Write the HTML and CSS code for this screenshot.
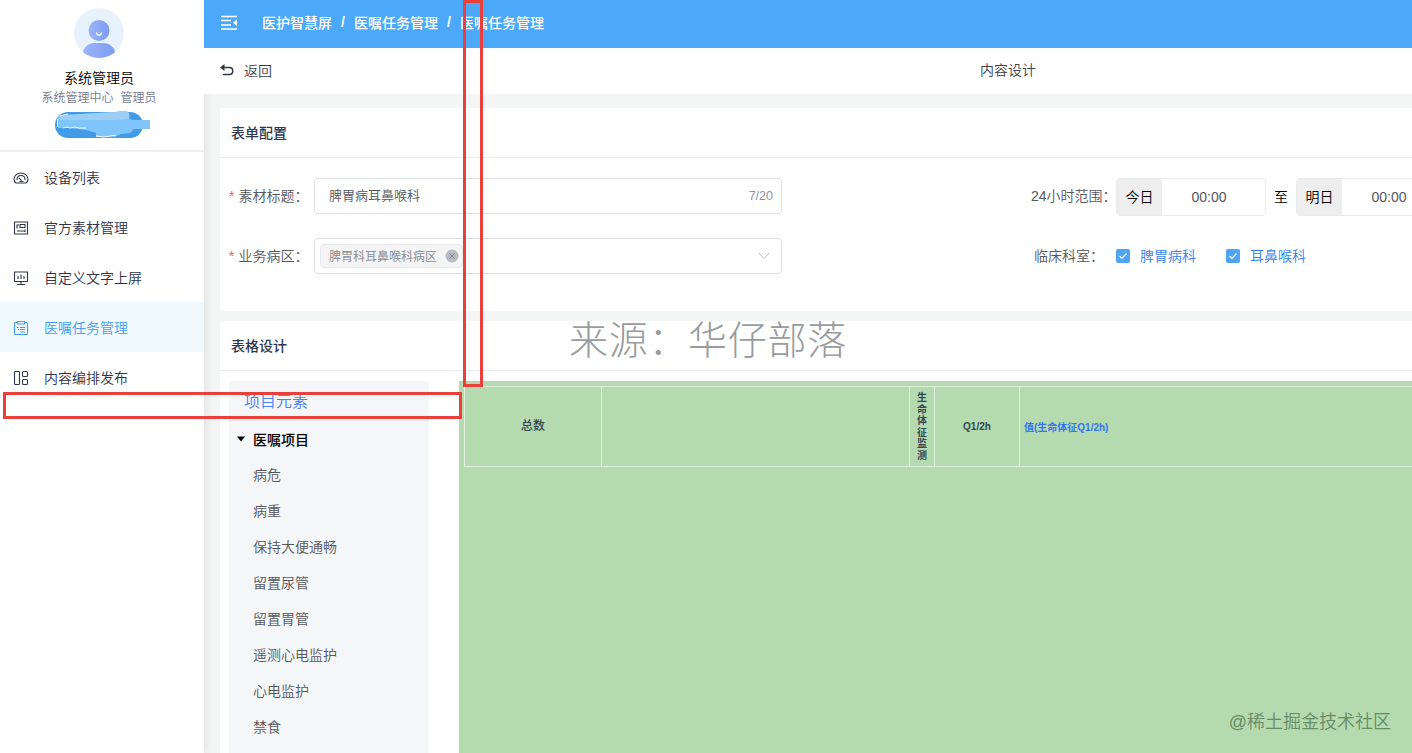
FILE: index.html
```html
<!DOCTYPE html>
<html lang="zh-CN">
<head>
    <meta charset="UTF-8">
    <meta name="viewport" content="width=device-width, initial-scale=1.0">
    <title>内容设计</title>
    <link rel="stylesheet" href="styles.css">
</head>
<body>
    <div class="layout">
        <aside class="sidebar">
            <div class="profile">
                <svg class="avatar" width="50" height="50" viewBox="0 0 50 50">
                    <defs>
                        <clipPath id="round"><circle cx="25" cy="25" r="25"/></clipPath>
                        <linearGradient id="body" x1="0" x2="1"><stop offset="0" stop-color="#9db4fb"/><stop offset="1" stop-color="#7b9cf0"/></linearGradient>
                    </defs>
                    <circle cx="25" cy="25" r="25" fill="#e8f2fd"/>
                    <g clip-path="url(#round)" fill="url(#body)">
                        <circle cx="25" cy="22.500" r="10.500"/>
                        <path d="M8.500 46c1-7 6-11 12-11h9c6 0 11 4 12 11v6h-33z"/>
                    </g>
                    <path d="M22.500 24.500c.5 3.500 4.500 3.500 5 0" fill="none" stroke="#fff" stroke-width="1.500"/>
                </svg>
                <div class="name">系统管理员</div>
                <div class="role"><span>系统管理中心</span><span>管理员</span></div>
                <div class="badge">
                    <svg width="97" height="29" viewBox="0 0 97 29">
                        <rect x="1" y="2" width="88" height="26" rx="13" fill="#429be8"/>
                        <path d="M3 8q1-3 6-3l52-3q10-2 13 0 2 2 1 7l5 1h16v9H80l-4 4-9 1-6 3H42v-4l-10-3-17-2H4z" fill="#7fc4fb"/>
                        <path d="M12 5l50-3q9-2 12 0 2 2 1 7l-13 1H4q1-5 8-5z" fill="#9bcdf5"/>
                        <path d="M9 18l4-1 3 1 5-1 4 1h7M42 26l8 1 12-2M3.500 9v8M6 6l8-2" fill="none" stroke="#f2faff" stroke-width="1"/>
                    </svg>
                </div>
            </div>
            <nav class="menu">
                <a class="menu-item">
                    <svg class="icon" viewBox="0 0 16 16"><path d="M3 13C1.300 12 1 10.500 1 9c.3-3.500 3.300-6 7-6s6.700 2.500 7 6c0 1.500-.3 3-2 4zM4 10c-.3-2.800 1.500-4.500 4-4.500s4.300 1.700 4 4.500M8.500 10.500L5.800 7.800M6.500 11.500h4"/></svg>
                    <span>设备列表</span>
                </a>
                <a class="menu-item">
                    <svg class="icon" viewBox="0 0 16 16"><path d="M1.500 2h13v12h-13zM4 4.500v4M4 5h2M7 4.500h5v3H7zM4 11h8M12 9.500V12"/></svg>
                    <span>官方素材管理</span>
                </a>
                <a class="menu-item">
                    <svg class="icon" viewBox="0 0 16 16"><path d="M1.500 2h13v9.500h-13zM5 6v3M8 4.500V9M11 6v3M8 11.500V14M4 14.500h8"/></svg>
                    <span>自定义文字上屏</span>
                </a>
                <a class="menu-item active">
                    <svg class="icon" viewBox="0 0 16 16"><path d="M4.500 2.500h-2q-1 0-1 1v10q0 1 1 1h11q1 0 1-1v-10q0-1-1-1h-2M4.500 1.500h7v2.500h-7zM4 7.500h1.500M7 7.500h5M5 9.500h1M7 9.500h5M7 12h5"/></svg>
                    <span>医嘱任务管理</span>
                </a>
                <a class="menu-item">
                    <svg class="icon" viewBox="0 0 16 16"><rect x="1.500" y="1.500" width="5" height="13" rx=".8"/><rect x="9.500" y="1.500" width="5" height="5" rx="1"/><rect x="9.500" y="9.500" width="5" height="5" rx="1"/></svg>
                    <span>内容编排发布</span>
                </a>
            </nav>
        </aside>

        <main class="main">
            <header class="topbar">
                <svg class="fold" width="17" height="16" viewBox="0 0 17 16"><path d="M0 1.500h16M0 5.500h10M0 10h10M0 14h16" stroke="#fff" stroke-width="1.300"/><path d="M16 4.500v6.500l-4-3.250z" fill="#fff"/></svg>
                <div class="crumbs"><span>医护智慧屏</span><i>/</i><span>医嘱任务管理</span><i>/</i><span>医嘱任务管理</span></div>
            </header>
            <div class="backbar">
                <div class="back">
                    <svg width="14" height="12" viewBox="0 0 14 12"><path d="M2 3.500h7.500c4.300 0 4.300 7 0 7H3" fill="none" stroke="#303846" stroke-width="1.500"/><path d="M0 3.500L4.500 0v7z" fill="#303846"/></svg>
                    <span>返回</span>
                </div>
                <div class="page-title">内容设计</div>
            </div>

            <section class="card config">
                <h2>表单配置</h2>
                <div class="form">
                    <div class="row">
                        <label class="required">素材标题：</label>
                        <div class="input"><span>脾胃病耳鼻喉科</span><small>7/20</small></div>
                    </div>
                    <div class="row range">
                        <label>24小时范围：</label>
                        <div class="time"><b>今日</b><span>00:00</span></div>
                        <em>至</em>
                        <div class="time"><b>明日</b><span>00:00</span></div>
                    </div>
                    <div class="row">
                        <label class="required">业务病区：</label>
                        <div class="input select">
                            <div class="tag">脾胃科耳鼻喉科病区
                                <svg width="14" height="14" viewBox="0 0 14 14"><circle cx="7" cy="7" r="6.500" fill="#b9bcc2"/><path d="M4.500 4.500l5 5M9.500 4.500l-5 5" stroke="#7f838a"/></svg>
                            </div>
                            <svg width="12" height="8" viewBox="0 0 12 8"><path d="M1 1l5 5.500L11 1" fill="none" stroke="#bcc0c8"/></svg>
                        </div>
                    </div>
                    <div class="row dept">
                        <label>临床科室：</label>
                        <div class="check"><svg width="14" height="14" viewBox="0 0 14 14"><rect width="14" height="14" rx="2" fill="#50a4f5"/><path d="M3.500 7l2.500 2.500 4.500-5" fill="none" stroke="#fff" stroke-width="1.200"/></svg><span>脾胃病科</span></div>
                        <div class="check"><svg width="14" height="14" viewBox="0 0 14 14"><rect width="14" height="14" rx="2" fill="#50a4f5"/><path d="M3.500 7l2.500 2.500 4.500-5" fill="none" stroke="#fff" stroke-width="1.200"/></svg><span>耳鼻喉科</span></div>
                    </div>
                </div>
            </section>

            <section class="card design">
                <h2>表格设计</h2>
                <div class="workspace">
                    <div class="elements">
                        <div class="elements-title">项目元素</div>
                        <div class="group"><svg width="8" height="6" viewBox="0 0 8 6"><path d="M0 .5h8L4 5.500z"/></svg>医嘱项目</div>
                        <ul>
                            <li>病危</li>
                            <li>病重</li>
                            <li>保持大便通畅</li>
                            <li>留置尿管</li>
                            <li>留置胃管</li>
                            <li>遥测心电监护</li>
                            <li>心电监护</li>
                            <li>禁食</li>
                        </ul>
                    </div>
                    <div class="canvas">
                        <div class="sheet">
                            <div class="cell total">总数</div>
                            <div class="cell"></div>
                            <div class="cell vertical">生命体征监测</div>
                            <div class="cell">Q1/2h</div>
                            <div class="cell value">值(生命体征Q1/2h)</div>
                        </div>
                    </div>
                </div>
            </section>
        </main>
    </div>

    <div class="mark mark-v"></div>
    <div class="mark mark-h"></div>
    <div class="source">来源：华仔部落</div>
    <div class="community">@稀土掘金技术社区</div>
</body>
</html>
```

FILE: styles.css
```css
* {
    box-sizing: border-box;
}
body {
    margin: 0;
    height: 753px;
    overflow: hidden;
    position: relative;
    font-family: "Liberation Sans", "Noto Sans CJK SC", sans-serif;
    font-size: 14px;
    font-weight: 350;
    color: #54565c;
    background: #f4f5f5;
}
.layout {
    display: flex;
    height: 753px;
    overflow: hidden;
}
.sidebar {
    width: 204px;
    flex: none;
    background: #fff;
    box-shadow: 0 0 10px rgba(0, 0, 0, 0.12);
}
.profile {
    height: 152px;
    padding: 8px 6px 0 0;
    border-bottom: 2px solid #eef0f0;
    display: flex;
    flex-direction: column;
    align-items: center;
}
.avatar {
    flex: none;
}
.name {
    margin-top: 10px;
    line-height: 20px;
    color: #000;
}
.role {
    display: flex;
    gap: 7px;
    font-size: 12px;
    line-height: 20px;
    color: #74788e;
}
.badge {
    margin: 2px 0 0 7px;
    height: 29px;
}
.menu {
    padding-top: 1px;
}
.menu-item {
    display: flex;
    align-items: center;
    gap: 15px;
    height: 50px;
    padding-left: 13px;
    color: #303448;
}
.menu-item span {
    margin-top: -2px;
}
.menu-item.active {
    background: #f0f9fd;
    color: #459fef;
    box-shadow: 0 -1px #f0f9fd;
    height: 49px;
    margin-bottom: 1px;
}
.icon {
    width: 16px;
    height: 16px;
    fill: none;
    stroke: currentColor;
    stroke-width: 1.1;
}

/* wider than the window, the right side is cut off */
.main {
    width: 1608px;
    flex: none;
    display: flex;
    flex-direction: column;
}
.topbar {
    height: 48px;
    flex: none;
    display: flex;
    align-items: center;
    gap: 24px;
    padding: 0 0 2px 17px;
    background: #4ca9f9;
    color: #fff;
}
.crumbs {
    display: flex;
    align-items: center;
    margin-top: -2px;
    font-weight: 500;
}
.crumbs i {
    width: 22px;
    text-align: center;
    font-style: normal;
    font-weight: bold;
}
.backbar {
    height: 46px;
    flex: none;
    display: grid;
    grid-template-columns: 1fr auto 1fr;
    align-items: center;
    padding: 0 16px 2px;
    background: #fff;
    color: #3c404c;
}
.page-title {
    padding-bottom: 2px;
}
.back {
    display: flex;
    align-items: center;
    gap: 10px;
}
.card {
    margin-left: 16px;
    background: #fff;
}
.card h2 {
    margin: 0;
    height: 50px;
    line-height: 51px;
    padding-left: 11px;
    border-bottom: 1px solid #ebedef;
    font-size: 14px;
    font-weight: 500;
    color: #303850;
}
.config {
    height: 203px;
    flex: none;
    margin-top: 14px;
}
.form {
    display: grid;
    grid-template-columns: 797px 1fr;
    row-gap: 24px;
    padding: 20px 0 0 9px;
}
.row {
    display: flex;
    align-items: center;
    height: 36px;
}
.row label {
    width: 85px;
    padding-bottom: 2px;
    white-space: nowrap;
}
.row.range {
    height: 38px;
    margin-bottom: -2px;
}
.row.range label {
    width: 90px;
    padding: 0 0 4px 5px;
}
.row.dept label {
    width: 90px;
    padding-left: 8px;
}
.required::before {
    content: "*";
    margin-right: 4px;
    color: #f05b5b;
}
.input {
    width: 468px;
    height: 36px;
    display: flex;
    align-items: center;
    justify-content: space-between;
    padding: 0 8px 0 14px;
    border: 1px solid #dcdfe3;
    border-radius: 4px;
    font-size: 13px;
}
.input span {
    padding-bottom: 3px;
}
.input small {
    font-size: 12.500px;
    color: #909399;
}
.select {
    padding: 0 11px 0 5px;
}
.tag {
    display: flex;
    align-items: center;
    gap: 8px;
    height: 24px;
    padding: 0 3px 1px 8px;
    border: 1px solid #e9e9eb;
    border-radius: 4px;
    background: #f4f4f5;
    color: #84878d;
    font-size: 12px;
}
.time {
    width: 150px;
    height: 38px;
    display: flex;
    border: 1px solid #ebebeb;
    border-radius: 4px;
    overflow: hidden;
    line-height: 36px;
    text-align: center;
}
.time b {
    width: 45px;
    background: #eee;
    color: #000;
    font-weight: 350;
}
.time span {
    width: 94px;
}
.row em {
    width: 30px;
    padding-bottom: 2px;
    text-align: center;
    font-style: normal;
    color: #000;
}
.check {
    width: 110px;
    display: flex;
    align-items: center;
    gap: 10px;
    color: #337ff0;
}
.check span {
    padding-bottom: 2px;
}

.design {
    flex: 1;
    margin-top: 10px;
}
.workspace {
    display: flex;
    gap: 30px;
    padding: 10px 0 0 9px;
}
.elements {
    width: 200px;
    height: 380px;
    background: #f4f6f8;
    border-radius: 4px;
}
.elements-title {
    height: 40px;
    padding-left: 15px;
    border-bottom: 1px solid #e4e7ea;
    font-size: 16px;
    line-height: 42px;
    color: #4b7ff2;
}
.group {
    display: flex;
    align-items: center;
    gap: 8px;
    height: 36px;
    padding: 0 0 1px 8px;
    color: #000;
    font-weight: 500;
}
.elements ul {
    list-style: none;
    margin: 0;
    padding: 0 0 0 24px;
}
.elements li {
    height: 36px;
    line-height: 36px;
}
.canvas {
    flex: 1;
    height: 380px;
    padding: 5px 0 0 5px;
    background: #b5daaf;
}
.sheet {
    display: grid;
    grid-template-columns: 137px 308px 25px 85px 1fr;
    height: 81px;
    border: 1px solid #e0f1e0;
    border-right: 0;
    font-size: 10px;
    font-weight: bold;
    color: #304754;
}
.cell {
    display: flex;
    align-items: center;
    justify-content: center;
    border-right: 1px solid #e0f1e0;
}
.cell.total {
    font-size: 12px;
    font-weight: 500;
    padding-bottom: 5px;
}
.cell.vertical {
    padding: 0 7px;
    line-height: 11.5px;
    word-break: break-all;
}
.cell.value {
    justify-content: flex-start;
    padding-left: 4px;
    color: #3573f4;
}

/* annotations over the page */
.mark {
    position: absolute;
    border: 3px solid #e9403c;
}
.mark-v {
    left: 463px;
    top: 0;
    width: 20px;
    height: 387px;
}
.mark-h {
    left: 3px;
    top: 392px;
    width: 459px;
    height: 27px;
}
.source {
    position: absolute;
    left: 569px;
    top: 312px;
    font-size: 39px;
    font-weight: 300;
    letter-spacing: 0.7px;
    line-height: 58px;
    color: #999b9e;
}
.community {
    position: absolute;
    right: 21px;
    bottom: 17px;
    font-size: 18px;
    line-height: 28px;
    color: #658b63;
}
```
